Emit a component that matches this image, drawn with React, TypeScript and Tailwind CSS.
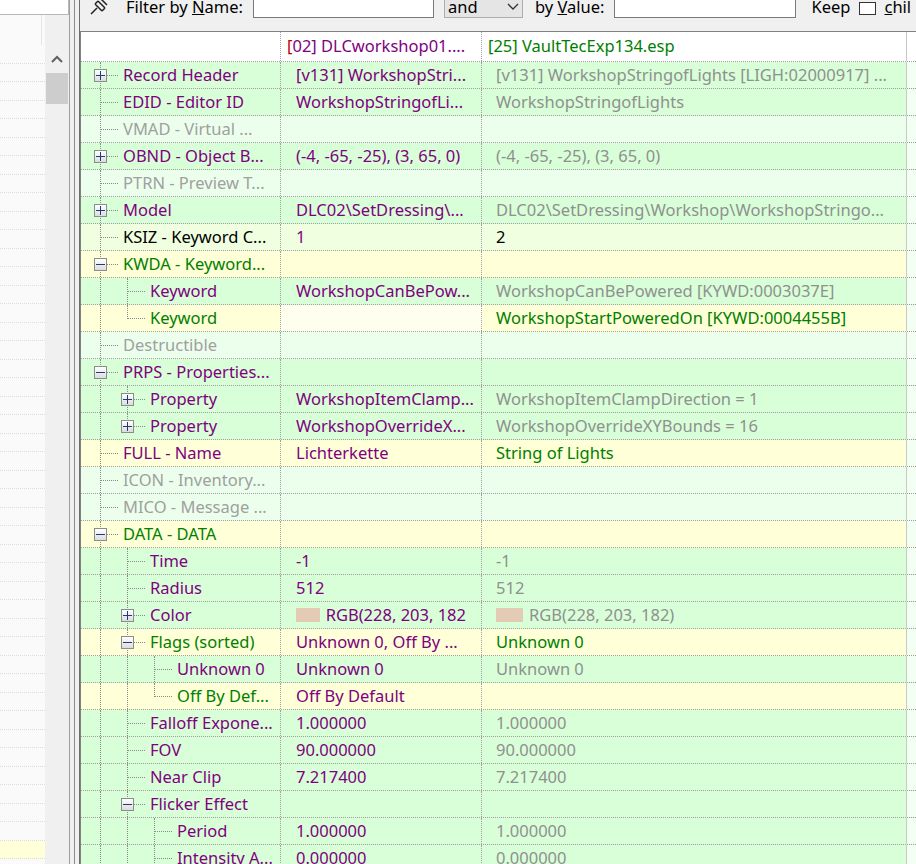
import React from "react";

type Row = {
  lvl: number; exp?: "+" | "-"; name: string; nc: string;
  c1?: string; c1c?: string; c2?: string; c2c?: string;
  bg: string; c1bg?: string; last?: boolean; sw?: boolean;
};

const P = "text-[#800080]", G = "text-[#008000]", Y = "text-[#a0a0a0]", K = "text-[#000000]", D = "text-[#909090]";
const GR = "bg-[#d8ffd8]", YE = "bg-[#ffffd8]", LG = "bg-[#ecffec]", KS = "bg-[#f0ffe0]";

const rows: Row[] = [
  { lvl: 0, exp: "+", name: "Record Header", nc: P, c1: "[v131] WorkshopStri...", c1c: P, c2: "[v131] WorkshopStringofLights [LIGH:02000917] ...", c2c: D, bg: GR },
  { lvl: 0, name: "EDID - Editor ID", nc: P, c1: "WorkshopStringofLi...", c1c: P, c2: "WorkshopStringofLights", c2c: D, bg: GR },
  { lvl: 0, name: "VMAD - Virtual ...", nc: Y, bg: LG },
  { lvl: 0, exp: "+", name: "OBND - Object B...", nc: P, c1: "(-4, -65, -25), (3, 65, 0)", c1c: P, c2: "(-4, -65, -25), (3, 65, 0)", c2c: D, bg: GR },
  { lvl: 0, name: "PTRN - Preview T...", nc: Y, bg: LG },
  { lvl: 0, exp: "+", name: "Model", nc: P, c1: "DLC02\\SetDressing\\...", c1c: P, c2: "DLC02\\SetDressing\\Workshop\\WorkshopStringo...", c2c: D, bg: GR },
  { lvl: 0, name: "KSIZ - Keyword C...", nc: K, c1: "1", c1c: P, c2: "2", c2c: K, bg: KS },
  { lvl: 0, exp: "-", name: "KWDA - Keyword...", nc: G, bg: YE },
  { lvl: 1, name: "Keyword", nc: P, c1: "WorkshopCanBePow...", c1c: P, c2: "WorkshopCanBePowered [KYWD:0003037E]", c2c: D, bg: GR },
  { lvl: 1, name: "Keyword", nc: G, c2: "WorkshopStartPoweredOn [KYWD:0004455B]", c2c: G, bg: YE, c1bg: "bg-[#fffff0]", last: true },
  { lvl: 0, name: "Destructible", nc: Y, bg: LG },
  { lvl: 0, exp: "-", name: "PRPS - Properties...", nc: P, bg: GR },
  { lvl: 1, exp: "+", name: "Property", nc: P, c1: "WorkshopItemClamp...", c1c: P, c2: "WorkshopItemClampDirection = 1", c2c: D, bg: GR },
  { lvl: 1, exp: "+", name: "Property", nc: P, c1: "WorkshopOverrideX...", c1c: P, c2: "WorkshopOverrideXYBounds = 16", c2c: D, bg: GR, last: true },
  { lvl: 0, name: "FULL - Name", nc: P, c1: "Lichterkette", c1c: P, c2: "String of Lights", c2c: G, bg: YE },
  { lvl: 0, name: "ICON - Inventory...", nc: Y, bg: LG },
  { lvl: 0, name: "MICO - Message ...", nc: Y, bg: LG },
  { lvl: 0, exp: "-", name: "DATA - DATA", nc: G, bg: YE },
  { lvl: 1, name: "Time", nc: P, c1: "-1", c1c: P, c2: "-1", c2c: D, bg: GR },
  { lvl: 1, name: "Radius", nc: P, c1: "512", c1c: P, c2: "512", c2c: D, bg: GR },
  { lvl: 1, exp: "+", name: "Color", nc: P, c1: "RGB(228, 203, 182", c1c: P, c2: "RGB(228, 203, 182)", c2c: D, bg: GR, sw: true },
  { lvl: 1, exp: "-", name: "Flags (sorted)", nc: G, c1: "Unknown 0, Off By ...", c1c: P, c2: "Unknown 0", c2c: G, bg: YE },
  { lvl: 2, name: "Unknown 0", nc: P, c1: "Unknown 0", c1c: P, c2: "Unknown 0", c2c: D, bg: GR },
  { lvl: 2, name: "Off By Def...", nc: G, c1: "Off By Default", c1c: P, bg: YE, last: true },
  { lvl: 1, name: "Falloff Expone...", nc: P, c1: "1.000000", c1c: P, c2: "1.000000", c2c: D, bg: GR },
  { lvl: 1, name: "FOV", nc: P, c1: "90.000000", c1c: P, c2: "90.000000", c2c: D, bg: GR },
  { lvl: 1, name: "Near Clip", nc: P, c1: "7.217400", c1c: P, c2: "7.217400", c2c: D, bg: GR },
  { lvl: 1, exp: "-", name: "Flicker Effect", nc: P, bg: GR },
  { lvl: 2, name: "Period", nc: P, c1: "1.000000", c1c: P, c2: "1.000000", c2c: D, bg: GR },
  { lvl: 2, name: "Intensity A...", nc: P, c1: "0.000000", c1c: P, c2: "0.000000", c2c: D, bg: GR },
];

const VL = "absolute left-[19px] border-l border-dotted border-[#8a8a8a]";

function Expander({ t }: { t: "+" | "-" }) {
  return (
    <div className="absolute left-[13px] top-[7px] w-[13px] h-[13px] border border-[#8c8c8c] bg-gradient-to-b from-[#ffffff] to-[#dcdcdc] flex items-center justify-center z-10">
      <div className="relative w-[9px] h-[9px]">
        <div className="absolute left-0 right-0 top-[4px] h-px bg-[#1c3d7a]" />
        {t === "+" && <div className="absolute top-0 bottom-0 left-[4px] w-px bg-[#1c3d7a]" />}
      </div>
    </div>
  );
}

function NameCell({ r }: { r: Row }) {
  const anc = [] as React.ReactNode[];
  for (let i = 0; i < r.lvl; i++)
    anc.push(<div key={i} className="relative w-[27px] h-full shrink-0"><div className={VL + " top-0 bottom-0"} /></div>);
  return (
    <div className="flex items-center h-full w-[200px] shrink-0 border-r border-dotted border-[#a0a0a0] overflow-hidden">
      {anc}
      <div className="relative w-[39px] h-full shrink-0">
        <div className={VL + (r.last ? " top-0 h-[14px]" : " top-0 bottom-0")} />
        <div className="absolute left-[20px] right-[2px] top-[13px] border-t border-dotted border-[#8a8a8a]" />
        {r.exp && <Expander t={r.exp} />}
      </div>
      <span className={"ml-[3px] whitespace-nowrap " + r.nc}>{r.name}</span>
    </div>
  );
}

function Swatch() {
  return <span className="inline-block w-[27px] h-[14px] bg-[#e4cbb6] mr-[6px] align-[-1px]" />;
}

export default function App() {
  return (
    <div className="w-[916px] h-[864px] overflow-hidden bg-[#f0f0f0] flex text-[16.5px] leading-none" style={{ fontFamily: '"Noto Sans", "Segoe UI", sans-serif' }}>
      {/* left pane */}
      <div className="w-[70px] h-full flex flex-col border-r border-[#a0a0a0] shrink-0 bg-[#fafafa]">
        <div className="h-[15px] border-b border-[#b8b8b8] bg-white border-r shrink-0" />
        <div className="flex flex-1 min-h-0">
          <div className="flex-1 flex flex-col">
            <div className="h-[30px] border-r border-[#e6e6e6] w-[42px]" />
            {Array.from({ length: 44 }).map((_, i) => (
              <div key={i} className={"h-[18.5px] border-b border-dotted border-[#dcdcdc] shrink-0 " + (i === 43 ? "bg-[#ffffd8]" : "")} />
            ))}
          </div>
          <div className="w-[24px] bg-[#f0f0f0] flex flex-col pt-[30px] shrink-0">
            <div className="h-[28px] flex items-center justify-center">
              <svg width="12" height="8" viewBox="0 0 12 8"><path d="M1 7 L6 2 L11 7" stroke="#606060" strokeWidth="2" fill="none" /></svg>
            </div>
            <div className="h-[31px] bg-[#cdcdcd] mx-[1px]" />
          </div>
        </div>
      </div>
      <div className="w-[5px] h-full border-r border-[#8c8c8c] shrink-0" />
      <div className="w-[5px] h-full border-r border-[#6e6e6e] shrink-0" />
      {/* right pane */}
      <div className="flex-1 flex flex-col min-w-0">
        <div className="h-[31px] shrink-0 relative">
          <div className="flex items-center gap-0 h-[22px] mt-[-4px] whitespace-nowrap text-black">
            <svg className="ml-[9px] mr-[17px]" width="20" height="16" viewBox="0 0 20 16">
              <path d="M2 15 L8 9 M6 5 L13 12 M9 2 L16 9 M9 2 L6 5 M13 12 L16 9 M12 0 L18 6" stroke="#222" strokeWidth="1.5" fill="none" />
            </svg>
            <span>Filter by <u>N</u>ame:</span>
            <div className="ml-[10px] w-[181px] h-[22px] bg-white border border-[#7a7a7a]" />
            <div className="ml-[10px] w-[79px] h-[22px] bg-[#e5e5e5] border border-[#adadad] flex items-center px-[3px] justify-between">
              <span>and</span>
              <svg width="12" height="8" viewBox="0 0 12 8"><path d="M1 1 L6 6 L11 1" stroke="#333" strokeWidth="1.3" fill="none" /></svg>
            </div>
            <span className="ml-[12px]">by <u>V</u>alue:</span>
            <div className="ml-[9px] w-[182px] h-[22px] bg-white border border-[#7a7a7a]" />
            <span className="ml-[16px]">Keep</span>
            <div className="ml-[9px] w-[17px] h-[13px] bg-white border border-[#333] mt-[3px]" />
            <span className="ml-[8px]"><u>c</u>hil</span>
          </div>
        </div>
        <div className="flex-1 min-h-0 border-l border-t border-[#828282] bg-white overflow-hidden">
          <div className="flex h-[30px] border-b border-dotted border-[#a0a0a0] bg-white">
            <div className="w-[200px] border-r border-dotted border-[#a0a0a0]" />
            <div className="w-[201px] px-[6px] flex items-center border-r border-dotted border-[#a0a0a0]">
              <span className="text-[#c00000]">[</span><span className="text-[#800080]">02] DLCworkshop01....</span>
            </div>
            <div className="w-[425px] px-[6px] flex items-center text-[#008000] border-r border-[#c8c8c8]">[25] VaultTecExp134.esp</div>
          </div>
          {rows.map((r, i) => (
            <div key={i} className={"flex h-[27px] border-b border-dotted border-[#a0a0a0] " + r.bg}>
              <NameCell r={r} />
              <div className={"w-[201px] shrink-0 px-[15px] flex items-center whitespace-nowrap overflow-hidden border-r border-dotted border-[#a0a0a0] " + (r.c1bg || "") + " " + (r.c1c || "")}>
                {r.sw && r.c1 && <Swatch />}{r.c1}
              </div>
              <div className={"w-[425px] shrink-0 px-[14px] flex items-center whitespace-nowrap overflow-hidden border-r border-[#c8c8c8] " + (r.c2c || "")}>
                {r.sw && r.c2 && <Swatch />}{r.c2}
              </div>
              <div className="flex-1 bg-[#f4fff4]" />
            </div>
          ))}
        </div>
      </div>
    </div>
  );
}
